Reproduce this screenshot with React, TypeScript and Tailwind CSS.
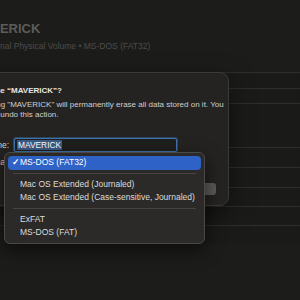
import React from "react";

const font = { fontFamily: '"Liberation Sans", Arial, sans-serif' };

function BackgroundRows() {
  const rows = [16, 15, 44, 20, 20, 19, 19, 19];
  return (
    <div className="flex flex-col">
      {rows.map((h, i) => (
        <div
          key={i}
          className="border-t border-[#2e2e2c] bg-gradient-to-r from-[#1d1d1b] to-[#1a1a18]"
          style={{ height: h }}
        />
      ))}
    </div>
  );
}

function FormatMenu() {
  const item = "flex h-[13.5px] items-center rounded-[4px] pl-[12px] text-[8.5px] text-[#dcdcdc]";
  return (
    <div className="absolute left-[4px] top-[152px] w-[201px] rounded-[6px] border border-[#4a4947] bg-[#2b2a28] px-[3px] py-[3px] shadow-[0_6px_18px_rgba(0,0,0,0.6)]">
      <div className="relative flex h-[13.5px] items-center rounded-[4px] bg-[#2e62c6] pl-[12px] text-[8.5px] text-white">
        <span className="absolute left-[4px] text-[9px] font-bold">✓</span>
        MS-DOS (FAT32)
      </div>
      <div className="mx-[5px] my-[3.5px] h-px bg-[#454442]" />
      <div className={item}>Mac OS Extended (Journaled)</div>
      <div className={item}>Mac OS Extended (Case-sensitive, Journaled)</div>
      <div className="mx-[5px] my-[3.5px] h-px bg-[#454442]" />
      <div className={item}>ExFAT</div>
      <div className={item}>MS-DOS (FAT)</div>
    </div>
  );
}

function EraseDialog() {
  return (
    <div className="absolute left-[-40px] top-[72px] h-[134px] w-[269px] rounded-[9px] border border-[#3b3a38] bg-[#242321] pl-[20px] pr-[12px] pt-[12px] shadow-[0_8px_24px_rgba(0,0,0,0.5)]">
      <div className="ml-[2px] text-[8px] font-bold leading-[12px] text-[#e6e6e6]">
        Erase “MAVERICK”?
      </div>
      <div className="mt-[3px] whitespace-nowrap text-[8px] leading-[9.5px] text-[#cfcfcf]">
        <div className="ml-[-3px]">Erasing "MAVERICK" will permanently erase all data stored on it. You</div>
        <div className="ml-[-7px]">cannot undo this action.</div>
      </div>
      <div className="mt-[19px] grid grid-cols-[28px_163px] items-center gap-x-[5px] gap-y-[4px] text-[8.4px] text-[#d8d8d8]">
        <span className="text-right">Name:</span>
        <div className="flex h-[14px] items-center rounded-[2px] border border-[#3f73ab] bg-[#1f1f1e] px-[2px] shadow-[0_0_0_1px_rgba(63,115,171,0.45)]">
          <span className="bg-[#3a5b86] px-[1px] leading-[10px] text-white">MAVERICK</span>
        </div>
        <span className="text-right">Format:</span>
        <div className="h-[13px] rounded-[3px] bg-[#3a3937]" />
      </div>
      <div className="mt-[14px] flex justify-end">
        <div className="h-[12px] w-[52px] rounded-[3px] bg-[#5b5a58]" />
      </div>
    </div>
  );
}

export default function App() {
  return (
    <div className="relative h-[300px] w-[300px] overflow-hidden bg-[#1c1c1a]" style={font}>
      <div className="h-[72px] pt-[21px]">
        <div className="ml-[-28px] text-[13px] font-bold leading-[15px] text-[#5c5c5a]">MAVERICK</div>
        <div className="ml-[-17px] mt-[5px] text-[8.5px] leading-[10px] text-[#4c4c4a]">
          Internal Physical Volume • MS-DOS (FAT32)
        </div>
      </div>
      <BackgroundRows />
      <EraseDialog />
      <FormatMenu />
    </div>
  );
}
